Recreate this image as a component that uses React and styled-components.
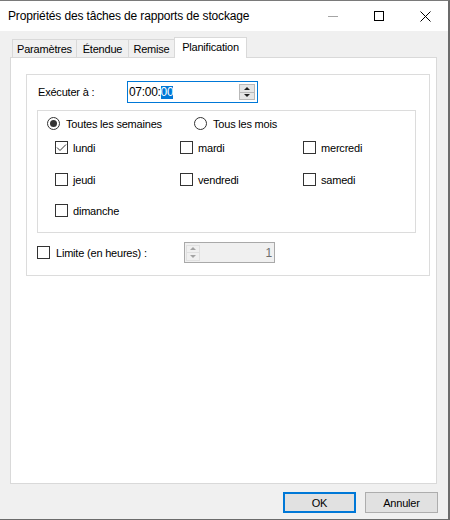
import React from 'react';
import styled, { createGlobalStyle } from 'styled-components';

const GlobalStyle = createGlobalStyle`
  html, body {
    margin: 0;
    padding: 0;
    background: #ffffff;
  }
  body {
    font-family: "Liberation Sans", Arial, sans-serif;
    font-size: 11px;
    letter-spacing: -0.2px;
    color: #000;
  }
`

const Window = styled.div`
  width: 450px;
  height: 520px;
  box-sizing: border-box;
  border-top: 1px solid #7a7a7a;
  border-right: 2px solid #6b6b6b;
  border-bottom: 1px solid #6b6b6b;
  background: #f0f0f0;
  display: flex;
  flex-direction: column;
  overflow: hidden;
`

const TitleBar = styled.div`
  flex: none;
  height: 30px;
  background: #fff;
  display: flex;
  align-items: center;
`

const Title = styled.div`
  flex: 1;
  padding-left: 8px;
  font-size: 12px;
  letter-spacing: -0.15px;
  white-space: nowrap;
`

const Caption = styled.div`
  width: 46px;
  height: 30px;
  display: flex;
  align-items: center;
  justify-content: center;
`

const Body = styled.div`
  flex: 1;
  display: flex;
  flex-direction: column;
  padding: 6px 11px 0 10px;
  min-height: 0;
`

const TabRow = styled.div`
  flex: none;
  height: 20px;
  display: flex;
  align-items: flex-end;
  padding-left: 2px;
`

const Tab = styled.div`
  box-sizing: border-box;
  width: ${p => p.$w}px;
  height: ${p => (p.$active ? 21 : 18)}px;
  margin-left: -1px;
  margin-bottom: ${p => (p.$active ? -1 : 0)}px;
  border: 1px solid #d9d9d9;
  border-bottom: none;
  background: ${p => (p.$active ? '#fff' : '#f0f0f0')};
  position: relative;
  z-index: ${p => (p.$active ? 2 : 1)};
  display: flex;
  align-items: center;
  justify-content: center;
  padding-bottom: ${p => (p.$active ? 2 : 0)}px;
  white-space: nowrap;
  &:first-child {
    margin-left: 0;
  }
`

const Panel = styled.div`
  flex: 1;
  box-sizing: border-box;
  background: #fff;
  border: 1px solid #d9d9d9;
  padding: 16px 0 0 15px;
`

const Group = styled.div`
  box-sizing: border-box;
  width: 404px;
  height: 202px;
  border: 1px solid #dcdcdc;
  padding: 6px 0 0 11px;
`

const TimeRow = styled.div`
  display: flex;
  align-items: center;
  height: 22px;
`

const FieldLabel = styled.div`
  width: 89px;
  white-space: nowrap;
`

const TimeBox = styled.div`
  box-sizing: border-box;
  width: 131px;
  height: 22px;
  border: 1px solid #0078d7;
  display: flex;
  align-items: center;
  padding-left: 1px;
  padding-right: 2px;
`

const TimeText = styled.div`
  flex: 1;
  font-size: 12px;
  letter-spacing: -0.3px;
  display: flex;
  align-items: center;
`

const Selected = styled.span`
  background: #0078d7;
  color: #fff;
  line-height: 13px;
`

const Spinner = styled.div`
  box-sizing: border-box;
  width: ${p => p.$w}px;
  height: 16px;
  display: flex;
  flex-direction: column;
`

const SpinButton = styled.div`
  flex: 1;
  box-sizing: border-box;
  border: 1px solid ${p => (p.$disabled ? '#e0e0e0' : '#b9b9b9')};
  background: ${p => (p.$disabled ? '#f0f0f0' : '#e6e6e6')};
  display: flex;
  align-items: center;
  justify-content: center;
  & + & {
    border-top: none;
  }
`

const Arrow = styled.div`
  width: 0;
  height: 0;
  border-left: 3px solid transparent;
  border-right: 3px solid transparent;
  ${p => (p.$up
    ? `border-bottom: 3px solid ${p.$disabled ? '#a3a3a3' : '#202020'};`
    : `border-top: 3px solid ${p.$disabled ? '#a3a3a3' : '#202020'};`)}
`

const DayBox = styled.div`
  box-sizing: border-box;
  width: 379px;
  height: 123px;
  margin: 7px 0 0 -1px;
  border: 1px solid #dcdcdc;
  padding: 6px 0 0 9px;
`

const RadioRow = styled.div`
  display: flex;
  align-items: center;
  height: 13px;
`

const RadioItem = styled.label`
  display: flex;
  align-items: center;
  width: ${p => p.$w}px;
  white-space: nowrap;
`

const RadioCircle = styled.span`
  box-sizing: border-box;
  width: 13px;
  height: 13px;
  border: 1px solid #333;
  border-radius: 50%;
  background: #fff;
  margin-right: 6px;
  display: flex;
  align-items: center;
  justify-content: center;
  &::after {
    content: '';
    width: 7px;
    height: 7px;
    border-radius: 50%;
    background: ${p => (p.$checked ? '#333' : 'transparent')};
  }
`

const DayGrid = styled.div`
  display: grid;
  grid-template-columns: 125px 123px 1fr;
  grid-template-rows: 32px 31px 31px;
  margin: 11px 0 0 8px;
`

const CheckItem = styled.label`
  display: flex;
  align-items: center;
  height: 13px;
  white-space: nowrap;
`

const Box = styled.span`
  box-sizing: border-box;
  flex: none;
  width: 13px;
  height: 13px;
  border: 1px solid #333;
  background: #fff;
  margin-right: ${p => p.$gap || 5}px;
  display: flex;
  align-items: center;
  justify-content: center;
`

const LimitRow = styled.div`
  display: flex;
  align-items: center;
  height: 21px;
  margin: 9px 0 0 -1px;
`

const LimitLabel = styled(CheckItem)`
  width: 147px;
`

const NumBox = styled.div`
  box-sizing: border-box;
  width: 91px;
  height: 21px;
  border: 1px solid #a9a9a9;
  background: #f0f0f0;
  display: flex;
  align-items: center;
  padding: 0 2px 0 1px;
`

const NumValue = styled.div`
  flex: 1;
  text-align: right;
  font-size: 12px;
  color: #6d6d6d;
`

const Footer = styled.div`
  flex: none;
  display: flex;
  justify-content: flex-end;
  gap: 9px;
  margin-top: 8px;
  padding-bottom: 6px;
  margin-right: -1px;
`

const Button = styled.button`
  box-sizing: border-box;
  width: 73px;
  height: 21px;
  margin: 0;
  padding: 0;
  font-family: inherit;
  font-size: 11px;
  letter-spacing: -0.2px;
  color: #000;
  background: #e1e1e1;
  border: ${p => (p.$default ? '2px solid #0078d7' : '1px solid #adadad')};
  border-radius: 0;
`

const Check = () => (
  <svg width="11" height="11" viewBox="0 0 11 11">
    <path d="M1 5.5 L4 8.5 L10 2.5" fill="none" stroke="#333" strokeWidth="1" />
  </svg>
)

const SpinControl = ({ w, disabled }) => (
  <Spinner $w={w}>
    <SpinButton $disabled={disabled}><Arrow $up $disabled={disabled} /></SpinButton>
    <SpinButton $disabled={disabled}><Arrow $disabled={disabled} /></SpinButton>
  </Spinner>
)

const Day = ({ label, checked }) => (
  <CheckItem>
    <Box>{checked && <Check />}</Box>
    {label}
  </CheckItem>
)

export default function App () {
  return (
    <>
      <GlobalStyle />
      <Window>
        <TitleBar>
          <Title>Propriétés des tâches de rapports de stockage</Title>
          <Caption>
            <svg width="10" height="10" viewBox="0 0 10 10">
              <path d="M0 5.5 H10" stroke="#000" strokeWidth="1" opacity="0.35" />
            </svg>
          </Caption>
          <Caption>
            <svg width="10" height="10" viewBox="0 0 10 10">
              <rect x="0.5" y="0.5" width="9" height="9" fill="none" stroke="#000" strokeWidth="1" />
            </svg>
          </Caption>
          <Caption>
            <svg width="11" height="11" viewBox="0 0 11 11">
              <path d="M0.5 0.5 L10.5 10.5 M10.5 0.5 L0.5 10.5" stroke="#000" strokeWidth="1" />
            </svg>
          </Caption>
        </TitleBar>
        <Body>
          <TabRow>
            <Tab $w={65}>Paramètres</Tab>
            <Tab $w={53}>Étendue</Tab>
            <Tab $w={47}>Remise</Tab>
            <Tab $w={73} $active>Planification</Tab>
          </TabRow>
          <Panel>
            <Group>
              <TimeRow>
                <FieldLabel>Exécuter à :</FieldLabel>
                <TimeBox>
                  <TimeText>07:00:<Selected>00</Selected></TimeText>
                  <SpinControl w={16} />
                </TimeBox>
              </TimeRow>
              <DayBox>
                <RadioRow>
                  <RadioItem $w={147}>
                    <RadioCircle $checked />
                    Toutes les semaines
                  </RadioItem>
                  <RadioItem $w={120}>
                    <RadioCircle />
                    Tous les mois
                  </RadioItem>
                </RadioRow>
                <DayGrid>
                  <Day label="lundi" checked />
                  <Day label="mardi" />
                  <Day label="mercredi" />
                  <Day label="jeudi" />
                  <Day label="vendredi" />
                  <Day label="samedi" />
                  <Day label="dimanche" />
                </DayGrid>
              </DayBox>
              <LimitRow>
                <LimitLabel>
                  <Box $gap={6} />
                  Limite (en heures) :
                </LimitLabel>
                <NumBox>
                  <SpinControl w={14} disabled />
                  <NumValue>1</NumValue>
                </NumBox>
              </LimitRow>
            </Group>
          </Panel>
          <Footer>
            <Button $default>OK</Button>
            <Button>Annuler</Button>
          </Footer>
        </Body>
      </Window>
    </>
  )
}
